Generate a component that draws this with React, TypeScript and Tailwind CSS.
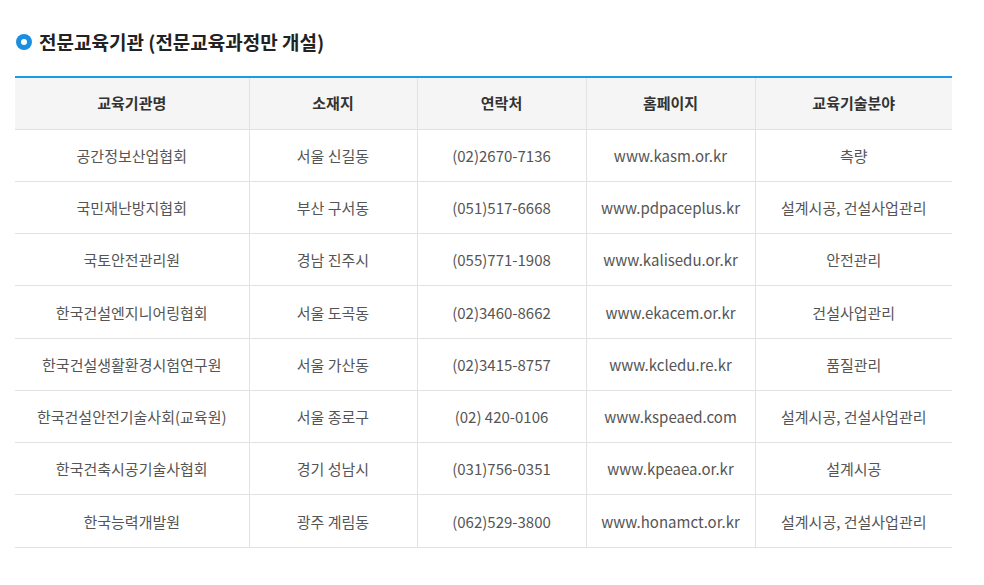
import React from "react";

const rows = [
  ["공간정보산업협회", "서울 신길동", "(02)2670-7136", "www.kasm.or.kr", "측량"],
  ["국민재난방지협회", "부산 구서동", "(051)517-6668", "www.pdpaceplus.kr", "설계시공, 건설사업관리"],
  ["국토안전관리원", "경남 진주시", "(055)771-1908", "www.kalisedu.or.kr", "안전관리"],
  ["한국건설엔지니어링협회", "서울 도곡동", "(02)3460-8662", "www.ekacem.or.kr", "건설사업관리"],
  ["한국건설생활환경시험연구원", "서울 가산동", "(02)3415-8757", "www.kcledu.re.kr", "품질관리"],
  ["한국건설안전기술사회(교육원)", "서울 종로구", "(02) 420-0106", "www.kspeaed.com", "설계시공, 건설사업관리"],
  ["한국건축시공기술사협회", "경기 성남시", "(031)756-0351", "www.kpeaea.or.kr", "설계시공"],
  ["한국능력개발원", "광주 계림동", "(062)529-3800", "www.honamct.or.kr", "설계시공, 건설사업관리"],
];

const heads = ["교육기관명", "소재지", "연락처", "홈페이지", "교육기술분야"];
const widths = ["w-[234px]", "w-[168px]", "w-[169px]", "w-[169px]", "w-[197px]"];

export default function App() {
  return (
    <div className="w-[984px] h-[585px] bg-white pl-[15px] pt-[31px]" style={{ fontFamily: '"Noto Sans CJK KR", "Noto Sans", sans-serif' }}>
      <div className="flex items-center h-[22px]">
        <span className="w-[16px] h-[16px] rounded-full bg-[#1a8fdf] flex items-center justify-center ml-[1px]">
          <span className="w-[6px] h-[6px] rounded-full bg-white" />
        </span>
        <span className="ml-[7px] text-[19px] font-bold text-[#222]">전문교육기관 (전문교육과정만 개설)</span>
      </div>
      <table className="mt-[23px] w-[937px] border-collapse border-t-2 border-t-[#1a9be8] table-fixed">
        <thead>
          <tr className="bg-[#f5f5f5] h-[52px]">
            {heads.map((h, i) => (
              <th key={i} className={`${widths[i]} text-[15px] font-bold text-[#333] border-b border-[#e2e2e2] ${i > 0 ? "border-l" : ""}`}>{h}</th>
            ))}
          </tr>
        </thead>
        <tbody>
          {rows.map((r, ri) => (
            <tr key={ri} className="h-[52.25px]">
              {r.map((c, ci) => (
                <td key={ci} className={`text-center text-[15px] pt-[2px] text-[#555] border-b border-[#e2e2e2] ${ci > 0 ? "border-l" : ""}`}>{c}</td>
              ))}
            </tr>
          ))}
        </tbody>
      </table>
    </div>
  );
}
